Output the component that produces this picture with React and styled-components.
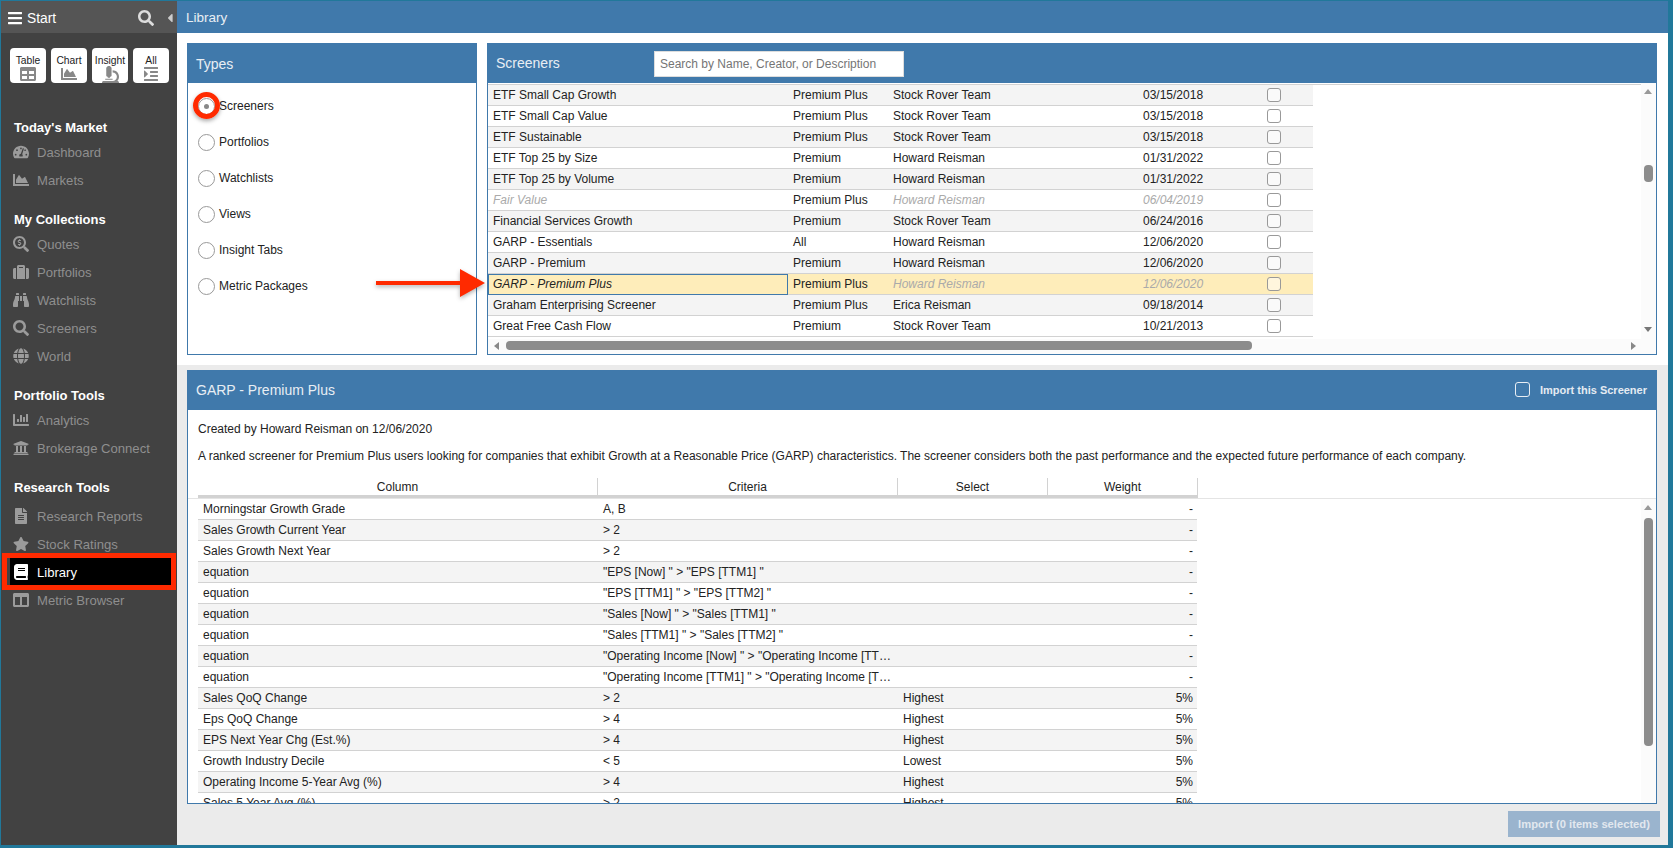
import React from "react";
import styled, { createGlobalStyle } from "styled-components";
import {
  FaBars, FaSearch, FaTable, FaChartArea, FaMicroscope, FaIndent, FaTachometerAlt,
  FaSearchDollar, FaSuitcase, FaBinoculars, FaGlobe, FaChartBar, FaUniversity,
  FaFileAlt, FaStar, FaBook, FaColumns, FaCaretLeft,
} from "react-icons/fa";

const BLUE = "#4079ab";

const navSections = [
  { title: "Today's Market", items: [["Dashboard", FaTachometerAlt], ["Markets", FaChartArea]] },
  {
    title: "My Collections",
    items: [["Quotes", FaSearchDollar], ["Portfolios", FaSuitcase], ["Watchlists", FaBinoculars], ["Screeners", FaSearch], ["World", FaGlobe]],
  },
  { title: "Portfolio Tools", items: [["Analytics", FaChartBar], ["Brokerage Connect", FaUniversity]] },
  {
    title: "Research Tools",
    loose: true,
    items: [["Research Reports", FaFileAlt], ["Stock Ratings", FaStar], ["Library", FaBook, true], ["Metric Browser", FaColumns]],
  },
];

const quickButtons = [["Table", FaTable], ["Chart", FaChartArea], ["Insight", FaMicroscope], ["All", FaIndent]];
const types = ["Screeners", "Portfolios", "Watchlists", "Views", "Insight Tabs", "Metric Packages"];

const screeners = [
  ["ETF Small Cap Growth", "Premium Plus", "Stock Rover Team", "03/15/2018"],
  ["ETF Small Cap Value", "Premium Plus", "Stock Rover Team", "03/15/2018"],
  ["ETF Sustainable", "Premium Plus", "Stock Rover Team", "03/15/2018"],
  ["ETF Top 25 by Size", "Premium", "Howard Reisman", "01/31/2022"],
  ["ETF Top 25 by Volume", "Premium", "Howard Reisman", "01/31/2022"],
  ["Fair Value", "Premium Plus", "Howard Reisman", "06/04/2019", "locked"],
  ["Financial Services Growth", "Premium", "Stock Rover Team", "06/24/2016"],
  ["GARP - Essentials", "All", "Howard Reisman", "12/06/2020"],
  ["GARP - Premium", "Premium", "Howard Reisman", "12/06/2020"],
  ["GARP - Premium Plus", "Premium Plus", "Howard Reisman", "12/06/2020", "selected"],
  ["Graham Enterprising Screener", "Premium Plus", "Erica Reisman", "09/18/2014"],
  ["Great Free Cash Flow", "Premium", "Stock Rover Team", "10/21/2013"],
];

const criteria = [
  ["Morningstar Growth Grade", "A, B", "", "-"],
  ["Sales Growth Current Year", "> 2", "", "-"],
  ["Sales Growth Next Year", "> 2", "", "-"],
  ["equation", '"EPS [Now] " > "EPS [TTM1] "', "", "-"],
  ["equation", '"EPS [TTM1] " > "EPS [TTM2] "', "", "-"],
  ["equation", '"Sales [Now] " > "Sales [TTM1] "', "", "-"],
  ["equation", '"Sales [TTM1] " > "Sales [TTM2] "', "", "-"],
  ["equation", '"Operating Income [Now] " > "Operating Income [TTM1] "', "", "-"],
  ["equation", '"Operating Income [TTM1] " > "Operating Income [TTM2] "', "", "-"],
  ["Sales QoQ Change", "> 2", "Highest", "5%"],
  ["Eps QoQ Change", "> 4", "Highest", "5%"],
  ["EPS Next Year Chg (Est.%)", "> 4", "Highest", "5%"],
  ["Growth Industry Decile", "< 5", "Lowest", "5%"],
  ["Operating Income 5-Year Avg (%)", "> 4", "Highest", "5%"],
  ["Sales 5 Year Avg (%)", "> 2", "Highest", "5%"],
];

const App = () => (
  <>
    <GlobalStyle />
    <Shell>
      <Sidebar>
        <StartBar>
          <FaBars size={16} color="#fff" />
          <StartLabel>Start</StartLabel>
          <FaSearch size={16} color="#ddd" />
          <FaCaretLeft size={14} color="#ccc" />
        </StartBar>
        <QuickRow>
          {quickButtons.map(([label, Icon]) => (
            <QuickButton key={label}>
              {label}
              <Icon size={label === "Insight" ? 17 : 16} color="#888" />
            </QuickButton>
          ))}
        </QuickRow>
        <Nav>
          {navSections.map((section) => (
            <NavSection key={section.title}>
              <NavTitle $loose={section.loose}>{section.title}</NavTitle>
              {section.items.map(([label, Icon, active]) => (
                <NavItem key={label} $active={active}>
                  <IconSlot>
                    <Icon size={label === "Stock Ratings" ? 18 : 16} color={active ? "#fff" : "#9b9b9b"} />
                  </IconSlot>
                  {label}
                </NavItem>
              ))}
            </NavSection>
          ))}
        </Nav>
      </Sidebar>

      <Main>
        <TitleBar>Library</TitleBar>
        <UpperArea>
          <TypesPanel>
            <PanelHeader>Types</PanelHeader>
            <TypeList>
              {types.map((type, i) => (
                <TypeOption key={type}>
                  <Radio $checked={i === 0} />
                  {type}
                </TypeOption>
              ))}
            </TypeList>
          </TypesPanel>

          <ScreenersPanel>
            <PanelHeader>
              <HeaderTitle>Screeners</HeaderTitle>
              <SearchBox placeholder="Search by Name, Creator, or Description" />
            </PanelHeader>
            <ListArea>
              <ScreenerRows>
                {screeners.map(([name, plan, creator, date, state]) => (
                  <ScreenerRow key={name} $selected={state === "selected"}>
                    <NameCell $selected={state === "selected"} $muted={state === "locked"}>{name}</NameCell>
                    <Cell>{plan}</Cell>
                    <Cell $muted={state}>{creator}</Cell>
                    <Cell $muted={state}>{date}</Cell>
                    <CheckCell><CheckBox /></CheckCell>
                  </ScreenerRow>
                ))}
              </ScreenerRows>
              <VScroll>
                <ArrowUp />
                <VThumb $top={71} $height={17} />
                <ArrowDown />
              </VScroll>
            </ListArea>
            <HScroll>
              <ArrowLeft />
              <HThumb />
              <ArrowRight />
            </HScroll>
          </ScreenersPanel>
        </UpperArea>

        <LowerArea>
          <DetailPanel>
            <PanelHeader>
              <HeaderTitle>GARP - Premium Plus</HeaderTitle>
              <ImportToggle>
                <CheckBox $light />
                Import this Screener
              </ImportToggle>
            </PanelHeader>
            <Info>Created by Howard Reisman on 12/06/2020</Info>
            <Info>
              A ranked screener for Premium Plus users looking for companies that exhibit Growth at a Reasonable Price (GARP) characteristics. The screener considers both the past performance and the expected future performance of each company.
            </Info>
            <CriteriaHead>
              <HeadCell>Column</HeadCell>
              <HeadCell>Criteria</HeadCell>
              <HeadCell>Select</HeadCell>
              <HeadCell>Weight</HeadCell>
            </CriteriaHead>
            <CriteriaBody>
              <CriteriaRows>
                {criteria.map(([column, rule, select, weight], i) => (
                  <CriteriaRow key={i}>
                    <Cell>{column}</Cell>
                    <Cell>{rule}</Cell>
                    <Cell>{select}</Cell>
                    <WeightCell>{weight}</WeightCell>
                  </CriteriaRow>
                ))}
              </CriteriaRows>
              <VScroll>
                <ArrowUp />
                <VThumb $top={8} $height={228} />
              </VScroll>
            </CriteriaBody>
          </DetailPanel>
          <Footer>
            <ImportButton>Import (0 items selected)</ImportButton>
          </Footer>
        </LowerArea>
      </Main>

      {/* red call-out arrow drawn over the page */}
      <CalloutArrow width="116" height="34" viewBox="0 0 116 34">
        <path d="M2 15h84V3l25 14-25 14V19H2z" fill="#ff2a00" />
      </CalloutArrow>
    </Shell>
  </>
);

export default App;

const GlobalStyle = createGlobalStyle`
  html, body {
    margin: 0;
    padding: 0;
  }
  body {
    font-family: "Liberation Sans", Arial, sans-serif;
    font-size: 12px;
    color: #222;
  }
`;

const Shell = styled.div`
  position: relative;
  display: flex;
  box-sizing: border-box;
  width: 1673px;
  height: 848px;
  padding: 1px 5px 3px 1px;
  background: #21789a;
  overflow: hidden;
`;

const Sidebar = styled.aside`
  display: flex;
  flex-direction: column;
  flex: 0 0 176px;
  background: #424242;
`;

const StartBar = styled.div`
  display: flex;
  align-items: center;
  gap: 9px;
  box-sizing: border-box;
  height: 32px;
  flex: none;
  padding: 2px 0 0 6px;
  background: #555;
`;

const StartLabel = styled.span`
  flex: 1;
  margin-left: -5px;
  font-size: 13.8px;
  color: #fff;
`;

const QuickRow = styled.div`
  display: flex;
  gap: 5px;
  padding: 15px 0 0 9px;
`;

const QuickButton = styled.div`
  display: flex;
  flex-direction: column;
  align-items: center;
  width: 36px;
  height: 35px;
  padding-top: 7px;
  box-sizing: border-box;
  border-radius: 4px;
  background: #fff;
  font-size: 10.3px;
  line-height: 11px;
  color: #222;
`;

const Nav = styled.nav`
  display: flex;
  flex-direction: column;
  gap: 14px;
  margin-top: 33px;
`;

const NavSection = styled.section`
  display: flex;
  flex-direction: column;
`;

const NavTitle = styled.h3`
  margin: 0 0 ${(p) => (p.$loose ? "4px" : "0")};
  height: 22px;
  padding-left: 13px;
  font-size: 13px;
  line-height: 24px;
  font-weight: bold;
  color: #fff;
`;

const NavItem = styled.a`
  position: relative;
  display: flex;
  align-items: center;
  gap: 8px;
  height: 28px;
  font-size: 13.1px;
  padding-left: ${(p) => (p.$active ? "3px" : "12px")};
  margin: ${(p) => (p.$active ? "0 6px 0 9px" : "0")};
  background: ${(p) => (p.$active ? "#000" : "transparent")};
  color: ${(p) => (p.$active ? "#fff" : "#8f8f8f")};

  ${(p) =>
    p.$active &&
    `
    box-sizing: border-box;
    height: 27px;
    margin-bottom: 1px;
    padding-top: 1px;
    &::after {
      content: "";
      position: absolute;
      top: -5px;
      right: -5px;
      bottom: -5px;
      left: -8px;
      border: 5px solid #ff2a00;
    }
  `}
`;

const IconSlot = styled.span`
  display: flex;
  justify-content: center;
  flex: none;
  width: 16px;
`;

const Main = styled.main`
  display: flex;
  flex-direction: column;
  flex: 1;
  min-width: 0;
`;

const TitleBar = styled.header`
  flex: none;
  height: 32px;
  padding-left: 9px;
  background: ${BLUE};
  color: #e8eef4;
  font-size: 13.5px;
  line-height: 33px;
`;

const UpperArea = styled.div`
  display: flex;
  gap: 10px;
  flex: none;
  height: 332px;
  box-sizing: border-box;
  padding: 10px 11px 10px 10px;
  background: #fff;
`;

const Panel = styled.section`
  display: flex;
  flex-direction: column;
  box-sizing: border-box;
  border: 1px solid ${BLUE};
  background: #fff;
`;

const TypesPanel = styled(Panel)`
  flex: 0 0 290px;
`;

const ScreenersPanel = styled(Panel)`
  flex: 1;
  min-width: 0;
`;

const PanelHeader = styled.div`
  display: flex;
  align-items: center;
  flex: none;
  height: 39px;
  margin-top: -1px;
  padding: 1px 9px 0 8px;
  background: ${BLUE};
  color: #e8eef4;
  font-size: 14px;
`;

const HeaderTitle = styled.div`
  flex: 1;
  margin-top: -2px;
`;

const TypeList = styled.div`
  display: flex;
  flex-direction: column;
  padding-top: 5px;
`;

const TypeOption = styled.label`
  display: flex;
  align-items: center;
  gap: 4px;
  height: 36px;
  padding-left: 10px;
`;

const Radio = styled.span`
  position: relative;
  display: flex;
  align-items: center;
  justify-content: center;
  box-sizing: border-box;
  width: 17px;
  height: 17px;
  border: 1.5px solid #999;
  border-radius: 50%;
  background: #fff;

  ${(p) =>
    p.$checked &&
    `
    &::before {
      content: "";
      width: 5px;
      height: 5px;
      border-radius: 50%;
      background: #888;
    }
    &::after {
      content: "";
      position: absolute;
      top: -6.5px;
      left: -6.5px;
      width: 27px;
      height: 27px;
      box-sizing: border-box;
      border: 5.5px solid #ff2a00;
      border-radius: 50%;
      box-shadow: 0 2px 4px rgba(0, 0, 0, 0.35);
    }
  `}
`;

const SearchBox = styled.input`
  box-sizing: border-box;
  width: 250px;
  height: 26px;
  margin-right: 743px;
  padding: 0 5px;
  border: 1px solid #ddd;
  outline: none;
  background: #fff;
  font-family: inherit;
  font-size: 12px;

  &::placeholder {
    color: #757575;
    opacity: 1;
  }
`;

const ListArea = styled.div`
  display: flex;
  flex: 1;
  min-height: 0;
`;

const ScreenerRows = styled.div`
  flex: 1;
  margin-top: 1px;
  border-top: 1px solid #d2d2d2;
  overflow: hidden;
`;

const ScreenerRow = styled.div`
  display: grid;
  grid-template-columns: 300px 100px 250px 124px 51px;
  box-sizing: border-box;
  width: 825px;
  height: 21px;
  border-bottom: 1px solid #d2d2d2;
  line-height: 20px;
  background: #fff;

  &:nth-child(odd) {
    background: #f4f4f4;
  }

  ${(p) => p.$selected && "&&& { background: #feedba; }"}
`;

const Cell = styled.div`
  padding: 0 5px;
  white-space: nowrap;
  overflow: hidden;
  text-overflow: ellipsis;
  ${(p) => p.$muted && "color: #aaa; font-style: italic;"}
`;

const NameCell = styled(Cell)`
  ${(p) => p.$selected && `
    box-sizing: border-box;
    margin-bottom: -1px;
    padding-left: 4px;
    border: 1px solid ${BLUE};
    line-height: 18px;
    font-style: italic;
  `}
`;

const CheckCell = styled.div`
  display: flex;
  align-items: center;
  padding-left: 5px;
`;

const CheckBox = styled.span`
  display: block;
  flex: none;
  box-sizing: border-box;
  width: ${(p) => (p.$light ? "15px" : "14px")};
  height: ${(p) => (p.$light ? "15px" : "14px")};
  border: 1.5px solid ${(p) => (p.$light ? "#e8eef4" : "#999")};
  border-radius: 3px;
  background: ${(p) => (p.$light ? "transparent" : "rgba(255,255,255,0.5)")};
`;

const VScroll = styled.div`
  flex: 0 0 15px;
  background: #fbfbfb;
`;

const VThumb = styled.div`
  width: 9px;
  height: ${(p) => p.$height}px;
  margin: ${(p) => p.$top}px 0 0 3px;
  border-radius: 4px;
  background: #8c8c8c;
`;

const ArrowUp = styled.div`
  width: 0;
  margin: 6px 0 0 3px;
  border: 4.5px solid transparent;
  border-top: 0;
  border-bottom: 5px solid #999;
`;

const ArrowDown = styled.div`
  width: 0;
  margin: 145px 0 0 3px;
  border: 4.5px solid transparent;
  border-bottom: 0;
  border-top: 5px solid #777;
`;

const HScroll = styled.div`
  display: flex;
  align-items: center;
  flex: none;
  height: 13px;
  padding-bottom: 2px;
  background: #fbfbfb;
`;

const HThumb = styled.div`
  width: 746px;
  height: 9px;
  margin-left: 7px;
  border-radius: 4px;
  background: #8c8c8c;
`;

const ArrowLeft = styled.div`
  margin-left: 6px;
  border: 4.5px solid transparent;
  border-left: 0;
  border-right: 5px solid #888;
`;

const ArrowRight = styled.div`
  margin-left: 379px;
  border: 4.5px solid transparent;
  border-right: 0;
  border-left: 5px solid #888;
`;

const LowerArea = styled.div`
  display: flex;
  flex-direction: column;
  flex: 1;
  min-height: 0;
  padding: 5px 11px 0 10px;
  background: #ebebeb;
`;

const DetailPanel = styled(Panel)`
  flex: none;
  height: 434px;
  overflow: hidden;
`;

const ImportToggle = styled.label`
  display: flex;
  align-items: center;
  gap: 10px;
  margin-top: -2px;
  font-size: 11px;
  font-weight: bold;
  color: #e4ebf2;
`;

const Info = styled.p`
  margin: 0;
  padding: 12px 10px 0;
  height: 15px;
  line-height: 15px;
  white-space: nowrap;
`;

const CriteriaHead = styled.div`
  display: grid;
  grid-template-columns: 400px 300px 150px 150px;
  flex: none;
  height: 20px;
  margin-top: 14px;
  padding-left: 10px;
  border-bottom: 1px solid #e4e4e4;
`;

const HeadCell = styled.div`
  box-sizing: border-box;
  height: 20px;
  border-right: 1px solid #d2d2d2;
  border-bottom: 3px solid #d2d2d2;
  text-align: center;
  line-height: 19px;
`;

const CriteriaBody = styled.div`
  display: flex;
  flex: 1;
  min-height: 0;
`;

const CriteriaRows = styled.div`
  flex: 1;
  padding-left: 10px;
  overflow: hidden;
`;

const CriteriaRow = styled.div`
  display: grid;
  grid-template-columns: 400px 300px 150px 149px;
  box-sizing: border-box;
  width: 999px;
  height: 21px;
  border-bottom: 1px solid #d2d2d2;
  line-height: 20px;
  background: #fff;

  &:nth-child(even) {
    background: #f4f4f4;
  }
`;

const WeightCell = styled(Cell)`
  text-align: right;
  padding-right: 4px;
`;

const Footer = styled.div`
  display: flex;
  justify-content: flex-end;
  margin-top: 7px;
  margin-right: -3px;
`;

const ImportButton = styled.button`
  width: 152px;
  height: 26px;
  padding: 0;
  border: 0;
  background: #9ab4ce;
  color: #e2e8ef;
  font-family: inherit;
  font-size: 11.2px;
  font-weight: bold;
`;

const CalloutArrow = styled.svg`
  position: absolute;
  left: 374px;
  top: 266px;
  filter: drop-shadow(0 2px 2px rgba(0, 0, 0, 0.3));
`;
